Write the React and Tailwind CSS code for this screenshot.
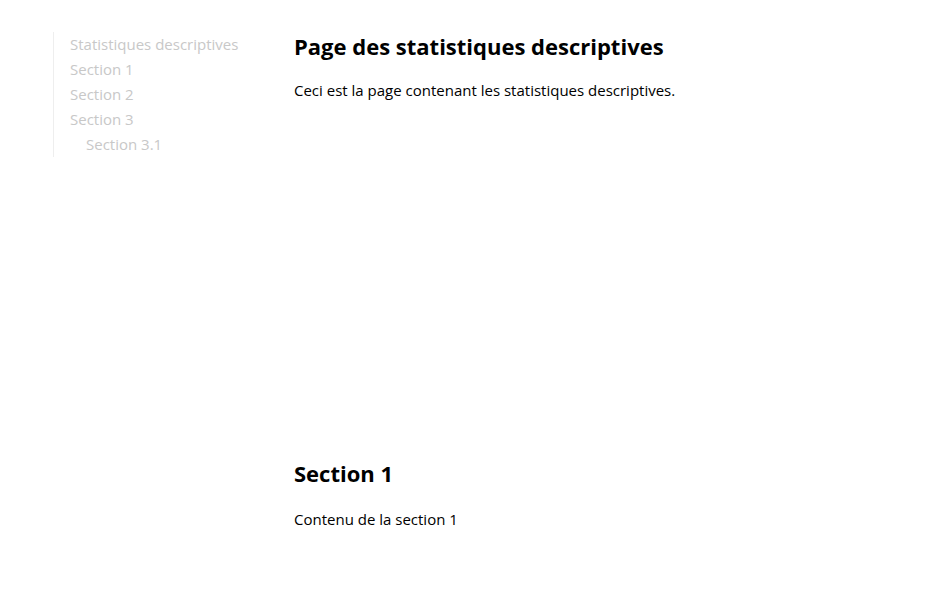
export default function App() {
  const items = [
    { t: "Statistiques descriptives", n: false },
    { t: "Section 1", n: false },
    { t: "Section 2", n: false },
    { t: "Section 3", n: false },
    { t: "Section 3.1", n: true },
  ];
  return (
    <div className="min-h-[606px] bg-white flex pl-[53px] pt-[32px]" style={{ fontFamily: '"Open Sans", sans-serif' }}>
      <nav className="w-[241px] shrink-0 self-start border-l border-[#eeeeee] pl-4">
        {items.map((it) => (
          <div key={it.t} className={`h-[25px] leading-[25px] text-[15px] text-[#c8c8c8] ${it.n ? "pl-4" : ""}`}>{it.t}</div>
        ))}
      </nav>
      <main className="flex-1">
        <h1 className="text-[22px] font-bold text-black leading-[28px]">Page des statistiques descriptives</h1>
        <p className="text-[15px] text-black mt-[19px] leading-[22px]">Ceci est la page contenant les statistiques descriptives.</p>
        <h2 className="text-[22px] font-bold text-black leading-[28px] mt-[358px]">Section 1</h2>
        <p className="text-[15px] text-black mt-[21px] leading-[22px]">Contenu de la section 1</p>
      </main>
    </div>
  );
}
